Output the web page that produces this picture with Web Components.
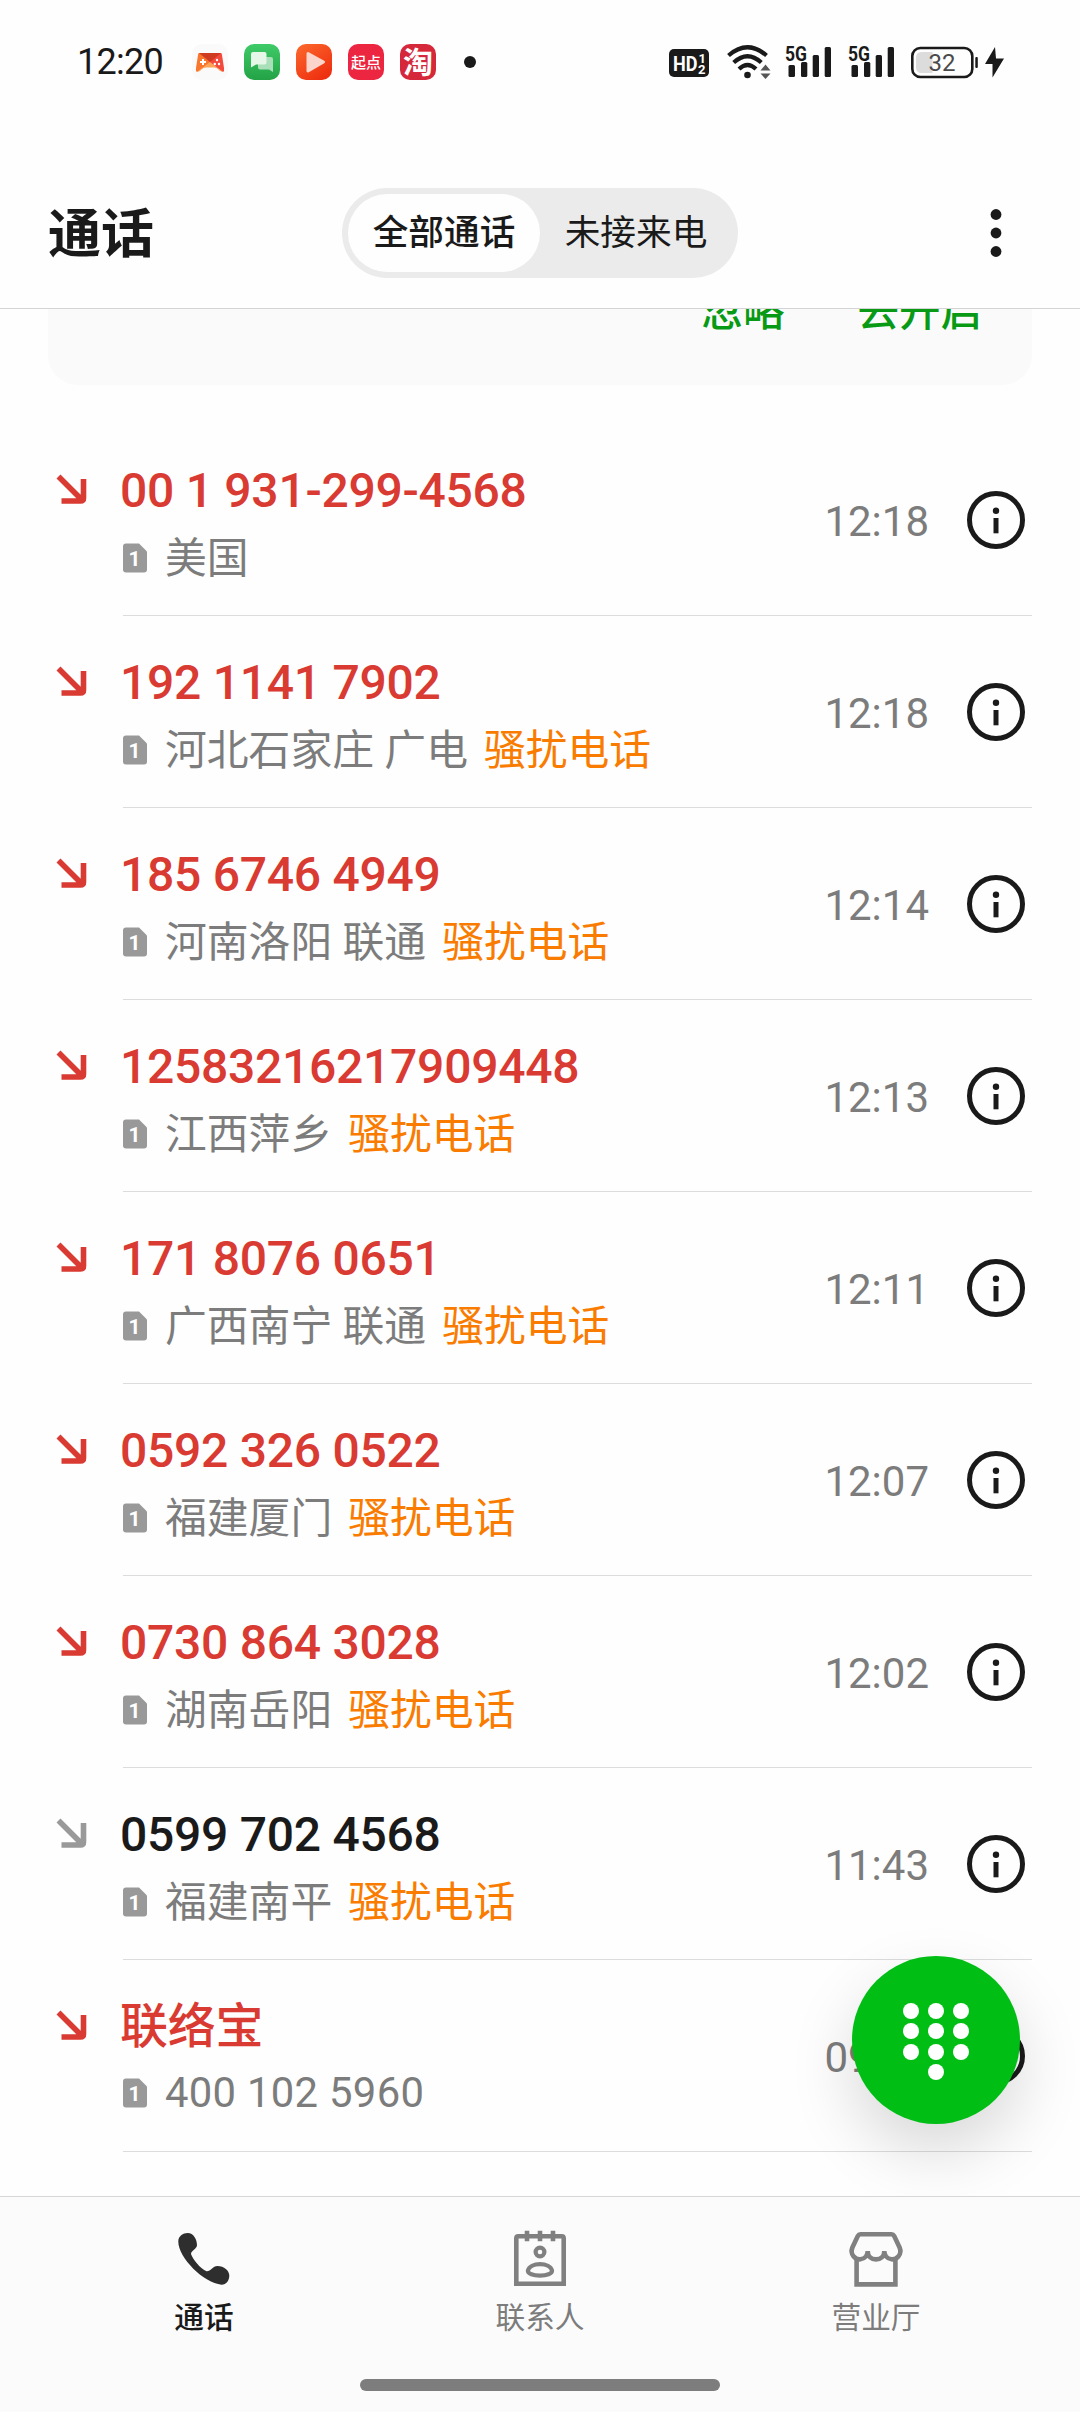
<!DOCTYPE html>
<html lang="zh-CN">
<head>
<meta charset="UTF-8">
<title>通话</title>
<style>
    :root {
        --color-ink: #1a1a1a;
        --color-muted: #7c7c7c;
        --color-line: #dcdcdc;
        --color-missed: #d93a32;
        --color-spam: #f97c00;
        --color-green: #00be14;
        --color-link: #089a14;
    }

    body {
        margin: 0;
        background: #fefefe;
        color: var(--color-ink);
        font-family: Roboto, 'Noto Sans CJK SC', sans-serif;
    }
</style>
</head>
<body>
<phone-screen>
    <status-bar slot="top"></status-bar>
    <call-header slot="top" heading="通话">
        <filter-tabs>
            <filter-tab active>全部通话</filter-tab>
            <filter-tab>未接来电</filter-tab>
        </filter-tabs>
    </call-header>
    <notice-card>
        <span>忽略</span>
        <span>去开启</span>
    </notice-card>
    <call-row missed name="00 1 931-299-4568" place="美国" time="12:18"></call-row>
    <call-row missed name="192 1141 7902" place="河北石家庄 广电" tag="骚扰电话" time="12:18"></call-row>
    <call-row missed name="185 6746 4949" place="河南洛阳 联通" tag="骚扰电话" time="12:14"></call-row>
    <call-row missed name="12583216217909448" place="江西萍乡" tag="骚扰电话" time="12:13"></call-row>
    <call-row missed name="171 8076 0651" place="广西南宁 联通" tag="骚扰电话" time="12:11"></call-row>
    <call-row missed name="0592 326 0522" place="福建厦门" tag="骚扰电话" time="12:07"></call-row>
    <call-row missed name="0730 864 3028" place="湖南岳阳" tag="骚扰电话" time="12:02"></call-row>
    <call-row name="0599 702 4568" place="福建南平" tag="骚扰电话" time="11:43"></call-row>
    <call-row missed name="联络宝" place="400 102 5960" time="09:45"></call-row>
    <dial-button slot="float"></dial-button>
    <bottom-nav slot="bottom">
        <nav-item active>
            <svg slot="icon" width="60" height="60" viewBox="0 0 60 60">
                <path fill="#2e2e2e" d="M4.3 12.5C4.3 7 9 4 13.7 4C19.5 4 23 10.5 23 16C23 20 17 21.5 17 25C19 31 26.5 39.5 32.5 42.3C36.5 42.8 38.5 37 43.5 37C50 37 55.3 41.5 55.3 46.5C55.3 51.5 52.5 55.5 47.5 55.7C30 54 4.3 29 4.3 12.5Z"/>
            </svg>
            通话
        </nav-item>
        <nav-item>
            <svg slot="icon" width="60" height="60" viewBox="0 0 60 60" fill="none" stroke="#808080" stroke-width="4.6">
                <path d="M6.3 54.7V9.3Q6.3 7.3 8.3 7.3H51.7Q53.7 7.3 53.7 9.3V54.7Z"/>
                <path d="M17 1.7V12.3M30 1.7V12.3M43 1.7V12.3"/>
                <circle cx="30" cy="23" r="4.4" stroke-width="4.2"/>
                <path stroke-width="4.2" d="M17.9 41.5C19 37.5 24 35.2 30 35.2S41 37.5 42 41.5C42.4 44.8 36.5 46.6 30 46.6S17.5 44.8 17.9 41.5Z"/>
            </svg>
            联系人
        </nav-item>
        <nav-item>
            <svg slot="icon" width="60" height="60" viewBox="0 0 60 60" fill="none" stroke="#808080" stroke-width="4.6">
                <path d="M14.5 5.3H45.5Q47.3 5.3 48.2 7L53.6 18.5C56.5 25.5 50.5 30.9 45.5 30.3C41 29.7 38.3 26.5 38.3 22C38.3 27.5 34.5 30.4 30 30.4S21.7 27.5 21.7 22C21.7 26.5 19 29.7 14.5 30.3C9.5 30.9 3.5 25.5 6.4 18.5L11.8 7Q12.7 5.3 14.5 5.3Z"/>
                <path d="M10.6 29V55.4H49.4V29"/>
            </svg>
            营业厅
        </nav-item>
    </bottom-nav>
</phone-screen>

<script>
class PhoneScreen extends HTMLElement {
    connectedCallback() {
        this.attachShadow({ mode: 'open' });
        this.shadowRoot.innerHTML = `
            <style>
                :host {
                    display: flex;
                    flex-direction: column;
                    width: 1080px;
                    height: 2412px;
                    position: relative;
                    overflow: hidden;
                }

                main {
                    flex: 1;
                    min-height: 0;
                    overflow: hidden;
                }

                ::slotted([slot="float"]) {
                    position: absolute;
                    right: 60px;
                    bottom: 288px;
                }

                ::slotted([slot="bottom"]) {
                    position: relative;
                }
            </style>
            <slot name="top"></slot>
            <main><slot></slot></main>
            <slot name="float"></slot>
            <slot name="bottom"></slot>
        `;
    }
}
customElements.define('phone-screen', PhoneScreen);

class StatusBar extends HTMLElement {
    connectedCallback() {
        const signal = `
            <svg width="48" height="44" viewBox="0 -4 48 44" fill="#1a1a1a">
                <text x="0" y="17" font-size="21" font-weight="700" textLength="22" lengthAdjust="spacingAndGlyphs">5G</text>
                <rect x="3.5" y="21" width="6.5" height="12" rx="1.5"/>
                <rect x="16" y="18" width="6.3" height="15" rx="1.5"/>
                <rect x="27.7" y="11" width="6.3" height="22" rx="1.5"/>
                <rect x="39.7" y="3" width="6.3" height="30" rx="1.5"/>
            </svg>`;
        this.attachShadow({ mode: 'open' });
        this.shadowRoot.innerHTML = `
            <style>
                :host {
                    display: flex;
                    justify-content: space-between;
                    height: 124px;
                    padding: 0 74px 0 77px;
                    box-sizing: border-box;
                }

                .side {
                    display: flex;
                    align-items: center;
                    height: 124px;
                }

                .clock {
                    width: 113px;
                    font-size: 36px;
                    letter-spacing: -0.7px;
                }

                .apps {
                    display: flex;
                    gap: 16px;
                }

                .dot {
                    width: 12px;
                    height: 12px;
                    margin-left: 28px;
                    border-radius: 50%;
                    background: var(--color-ink);
                }

                svg {
                    display: block;
                    overflow: visible;
                }
            </style>
            <div class="side">
                <span class="clock">12:20</span>
                <div class="apps">
                    <svg style="margin-left:2px" width="36" height="36" viewBox="0 0 36 36">
                        <rect width="36" height="36" rx="10" fill="#fafafa"/>
                        <path d="M7 9H18V19L5 28Q3.5 27 4 24L6 11Q6.200 9 7 9Z" fill="#f9762f"/>
                        <path d="M29 9H18V19L31 28Q32.500 27 32 24L30 11Q29.800 9 29 9Z" fill="#f4493d"/>
                        <path d="M7 9H29L18 18Z" fill="#cf3b20"/>
                        <path d="M5 28L18 18L31 28Q28 28 26 25Q25 23.500 22 23.500H14Q11 23.500 10 25Q8 28 5 28Z" fill="#fda456"/>
                        <path d="M11 15V21M8 18H14" stroke="#fff" stroke-width="2"/>
                        <g fill="#fff"><circle cx="25" cy="16" r="1.200"/><circle cx="22.800" cy="20" r="1.200"/><circle cx="27" cy="20" r="1.200"/></g>
                    </svg>
                    <svg width="36" height="36" viewBox="0 0 36 36">
                        <defs><linearGradient id="g" x2="0" y2="1"><stop stop-color="#3fca68"/><stop offset="1" stop-color="#23a346"/></linearGradient></defs>
                        <rect width="36" height="36" rx="10" fill="url(#g)"/>
                        <path d="M14 13H27Q29 13 29 15V28L25 25.500H16Q14 25.500 14 23.500Z" fill="#a9dfb9"/>
                        <path d="M9 8H20.500Q22.500 8 22.500 10V18.500Q22.500 20.500 20.500 20.500H12L7 23.500V10Q7 8 9 8Z" fill="#e6f7ea"/>
                    </svg>
                    <svg width="36" height="36" viewBox="0 0 36 36">
                        <defs><linearGradient id="o" x2="0.700" y2="1"><stop stop-color="#fc6a2d"/><stop offset="1" stop-color="#ee2f10"/></linearGradient></defs>
                        <rect width="36" height="36" rx="10" fill="url(#o)"/>
                        <path d="M12 9.500L27.500 18L12 27Z" fill="#fbd5cb" stroke="#fbd5cb" stroke-width="3" stroke-linejoin="round"/>
                    </svg>
                    <svg width="36" height="36" viewBox="0 0 36 36">
                        <rect width="36" height="36" rx="10" fill="#ec2640"/>
                        <text x="18" y="23.500" text-anchor="middle" font-size="15" font-weight="500" fill="#fff">起点</text>
                    </svg>
                    <svg width="36" height="36" viewBox="0 0 36 36">
                        <rect width="36" height="36" rx="10" fill="#d5283a"/>
                        <text x="18" y="29" text-anchor="middle" font-size="30" font-weight="700" fill="#fff">淘</text>
                    </svg>
                </div>
                <span class="dot"></span>
            </div>
            <div class="side">
                <svg style="margin:2px 18px 0 0" width="40" height="28" viewBox="0 0 40 28">
                    <rect width="40" height="28" rx="5" fill="#1a1a1a"/>
                    <g fill="#fff" font-weight="700">
                        <text x="4" y="21.500" font-size="21" textLength="24.500" lengthAdjust="spacingAndGlyphs">HD</text>
                        <text x="29.500" y="13.500" font-size="13">1</text>
                        <text x="29" y="25" font-size="13">2</text>
                    </g>
                </svg>
                <svg style="margin-right:14px" width="44" height="36" viewBox="0 0 44 36" fill="none" stroke="#1a1a1a" stroke-width="4.200">
                    <path d="M1.500 11.500Q20.500 -5 39.500 11.500M6.700 18.500Q20.500 6 34.300 18.500M12 25Q20.500 17 29 25"/>
                    <circle cx="20.500" cy="31" r="3.300" fill="#1a1a1a" stroke="none"/>
                    <path d="M33.500 26.500L38.500 20.500L43.500 26.500ZM33.500 29.500L38.500 35L43.500 29.500Z" fill="#555" stroke="none"/>
                </svg>
                ${signal}
                <span style="width:15px"></span>
                ${signal}
                <svg style="margin-left:14px" width="96" height="36" viewBox="0 0 96 36">
                    <rect x="2.300" y="4" width="60" height="29" rx="8" fill="none" stroke="#1a1a1a" stroke-width="2.600"/>
                    <path d="M11.500 8H22.500V29H11.500Q6 29 6 23V14Q6 8 11.500 8Z" fill="#dcdcdc"/>
                    <rect x="65.300" y="13" width="2.500" height="11" rx="1" fill="#1a1a1a"/>
                    <text x="32" y="27" text-anchor="middle" font-size="24" fill="#4a4a4a">32</text>
                    <path d="M85 3L75 20H82.500V33.500L94 14.500H86Z" fill="#1a1a1a"/>
                </svg>
            </div>
        `;
    }
}
customElements.define('status-bar', StatusBar);

class CallHeader extends HTMLElement {
    connectedCallback() {
        this.attachShadow({ mode: 'open' });
        this.shadowRoot.innerHTML = `
            <style>
                :host {
                    display: grid;
                    grid-template-columns: 1fr auto 1fr;
                    align-items: center;
                    height: 185px;
                    padding: 33px 48px 0;
                    box-sizing: border-box;
                    border-bottom: 1px solid #d4d4d4;
                }

                h1 {
                    margin: 4px 0 0;
                    font-size: 53px;
                    font-weight: 700;
                    line-height: 80px;
                }

                svg {
                    justify-self: end;
                    margin-right: 29px;
                }
            </style>
            <h1>${this.getAttribute('heading')}</h1>
            <slot></slot>
            <svg width="14" height="50" viewBox="0 0 14 50" fill="#1a1a1a">
                <circle cx="7" cy="6.500" r="5.400"/>
                <circle cx="7" cy="25" r="5.400"/>
                <circle cx="7" cy="43.500" r="5.400"/>
            </svg>
        `;
    }
}
customElements.define('call-header', CallHeader);

class FilterTabs extends HTMLElement {
    connectedCallback() {
        this.attachShadow({ mode: 'open' });
        this.shadowRoot.innerHTML = `
            <style>
                :host {
                    display: flex;
                    padding: 6px;
                    border-radius: 45px;
                    background: #ebebeb;
                }
            </style>
            <slot></slot>
        `;
    }
}
customElements.define('filter-tabs', FilterTabs);

class FilterTab extends HTMLElement {
    connectedCallback() {
        this.attachShadow({ mode: 'open' });
        this.shadowRoot.innerHTML = `
            <style>
                :host {
                    display: block;
                    width: 192px;
                    border-radius: 39px;
                    font-size: 35.7px;
                    line-height: 79px;
                    height: 78px;
                    text-align: center;
                }

                :host([active]) {
                    background: #fefefe;
                    font-weight: 500;
                }
            </style>
            <slot></slot>
        `;
    }
}
customElements.define('filter-tab', FilterTab);

class NoticeCard extends HTMLElement {
    connectedCallback() {
        this.attachShadow({ mode: 'open' });
        // scrolled partly under the header
        this.shadowRoot.innerHTML = `
            <style>
                :host {
                    display: flex;
                    justify-content: flex-end;
                    align-items: flex-end;
                    gap: 73px;
                    height: 136px;
                    margin: -60px 48px 39px;
                    padding: 0 50px 43px 0;
                    box-sizing: border-box;
                    border-radius: 30px;
                    background: #fafafa;
                    color: var(--color-link);
                    font-size: 41.5px;
                    font-weight: 500;
                    line-height: 60px;
                }
            </style>
            <slot></slot>
        `;
    }
}
customElements.define('notice-card', NoticeCard);

class CallRow extends HTMLElement {
    connectedCallback() {
        const tag = this.getAttribute('tag');
        const place = this.getAttribute('place');
        const isNumber = /^[\d ]+$/.test(place);
        this.attachShadow({ mode: 'open' });
        this.shadowRoot.innerHTML = `
            <style>
                :host {
                    display: flex;
                    height: 192px;
                    padding: 0 48px 0 55px;
                    box-sizing: border-box;
                    --arrow: #999;
                }

                :host([missed]) {
                    --arrow: var(--color-missed);
                }

                .arrow {
                    flex: none;
                    margin-top: 49px;
                    width: 68px;
                    height: 34px;
                }

                .body {
                    flex: 1;
                    display: flex;
                    align-items: center;
                    border-bottom: 1px solid var(--color-line);
                }

                .text {
                    flex: 1;
                    align-self: flex-start;
                    margin-left: -3px;
                    padding-top: 37px;
                }

                .name {
                    font-size: 48px;
                    font-weight: 500;
                    letter-spacing: -0.27px;
                    line-height: 60px;
                    white-space: nowrap;
                }

                :host([missed]) .name {
                    color: var(--color-missed);
                }

                .sub {
                    display: flex;
                    align-items: center;
                    margin-top: 10px;
                    padding-left: 3px;
                    font-size: 41.8px;
                    line-height: 56px;
                    color: var(--color-muted);
                    white-space: nowrap;
                }

                .sub svg {
                    margin: 0 18px 3px 0;
                }

                .number {
                    margin-top: -2px;
                    letter-spacing: 0.3px;
                }

                .tag {
                    margin-left: 16px;
                    color: var(--color-spam);
                }

                time {
                    margin: 3px 37px 0 0;
                    font-size: 42px;
                    color: var(--color-muted);
                }

                .info {
                    margin-right: 6px;
                }
            </style>
            <svg class="arrow" viewBox="0 0 68 34" fill="none" stroke="var(--arrow)" stroke-width="5.600">
                <path d="M3.500 3.500L27.500 27.500M6.500 28H25.500Q28.500 28 28.500 25V6"/>
            </svg>
            <div class="body">
                <div class="text">
                    <div class="name">${this.getAttribute('name')}</div>
                    <div class="sub">
                        <svg width="24" height="30" viewBox="0 0 24 30">
                            <path fill="#999" d="M3 0.500H16L24 8.500V26.500Q24 29.500 21 29.500H3Q0 29.500 0 26.500V3.500Q0 0.500 3 0.500Z"/>
                            <text x="11.500" y="23" text-anchor="middle" font-size="21" font-weight="700" fill="#fff">1</text>
                        </svg>
                        <span class="${isNumber ? 'number' : ''}">${place}</span>
                        ${tag ? `<span class="tag">${tag}</span>` : ''}
                    </div>
                </div>
                <time>${this.getAttribute('time')}</time>
                <svg class="info" width="60" height="60" viewBox="0 0 60 60">
                    <circle cx="30" cy="30" r="26.500" fill="none" stroke="#1a1a1a" stroke-width="5"/>
                    <circle cx="30" cy="20.700" r="3.200" fill="#1a1a1a"/>
                    <rect x="27.500" y="28" width="5" height="15.300" fill="#1a1a1a"/>
                </svg>
            </div>
        `;
    }
}
customElements.define('call-row', CallRow);

class DialButton extends HTMLElement {
    connectedCallback() {
        this.attachShadow({ mode: 'open' });
        this.shadowRoot.innerHTML = `
            <style>
                :host {
                    display: flex;
                    justify-content: center;
                    align-items: center;
                    width: 168px;
                    height: 168px;
                    border-radius: 50%;
                    background: var(--color-green);
                    box-shadow: 0 28px 64px rgba(0, 0, 0, 0.15);
                }

                .keys {
                    display: grid;
                    grid-template-columns: repeat(3, 16px);
                    gap: 4.600px 9.300px;
                    margin-top: 3px;
                }

                i {
                    height: 16px;
                    border-radius: 50%;
                    background: #fff;
                }

                i:last-child {
                    grid-column: 2;
                }
            </style>
            <div class="keys">${'<i></i>'.repeat(10)}</div>
        `;
    }
}
customElements.define('dial-button', DialButton);

class BottomNav extends HTMLElement {
    connectedCallback() {
        this.attachShadow({ mode: 'open' });
        this.shadowRoot.innerHTML = `
            <style>
                :host {
                    display: block;
                    height: 216px;
                    padding: 0 36px;
                    box-sizing: border-box;
                    border-top: 1px solid #d6d6d6;
                    background: #fbfbfb;
                }

                nav {
                    display: grid;
                    grid-template-columns: repeat(3, 1fr);
                    height: 182px;
                    padding-top: 32px;
                    box-sizing: border-box;
                }

                .handle {
                    width: 360px;
                    height: 12px;
                    margin: 0 auto;
                    border-radius: 6px;
                    background: #7d7d7d;
                }
            </style>
            <nav><slot></slot></nav>
            <div class="handle"></div>
        `;
    }
}
customElements.define('bottom-nav', BottomNav);

class NavItem extends HTMLElement {
    connectedCallback() {
        this.attachShadow({ mode: 'open' });
        this.shadowRoot.innerHTML = `
            <style>
                :host {
                    display: flex;
                    flex-direction: column;
                    align-items: center;
                    font-size: 29.7px;
                    line-height: 40px;
                    color: var(--color-muted);
                }

                :host([active]) {
                    color: var(--color-ink);
                    font-weight: 500;
                }

                span {
                    margin-top: 9px;
                }
            </style>
            <slot name="icon"></slot>
            <span><slot></slot></span>
        `;
    }
}
customElements.define('nav-item', NavItem);
</script>
</body>
</html>
